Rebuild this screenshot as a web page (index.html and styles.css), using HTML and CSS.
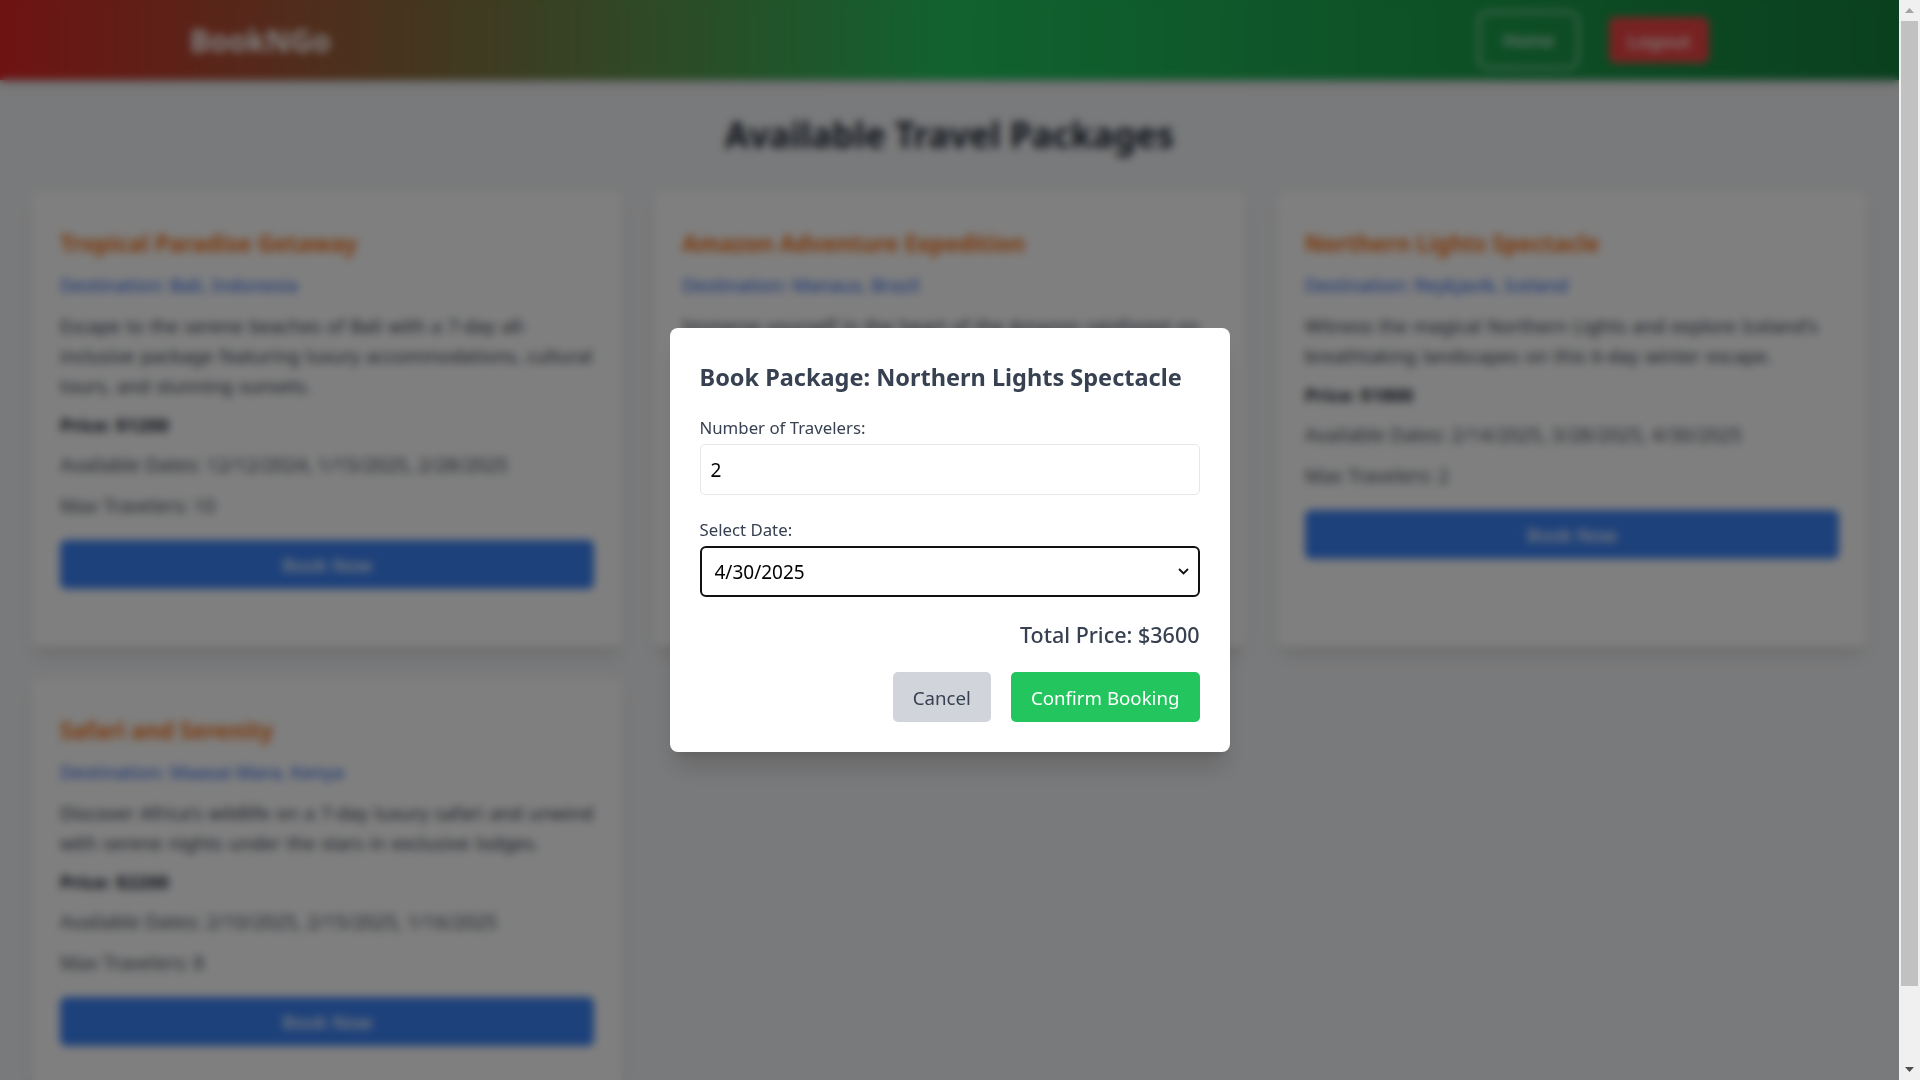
FILE: index.html
```html
<!DOCTYPE html>
<html lang="en">
<head>
<meta charset="utf-8">
<title>BookNGo - Available Travel Packages</title>
<link rel="stylesheet" href="styles.css">
</head>
<body>
<div class="app">
  <div class="viewport">
    <header class="topbar">
      <div class="topbar-inner">
        <div class="logo">BookNGo</div>
        <nav class="nav">
          <a class="nav-home">Home</a>
          <button class="nav-logout" type="button">Logout</button>
        </nav>
      </div>
    </header>

    <main class="main">
      <h1 class="page-title">Available Travel Packages</h1>
      <div class="grid">
        <article class="card">
          <h3 class="card-title">Tropical Paradise Getaway</h3>
          <p class="card-dest">Destination: Bali, Indonesia</p>
          <p class="card-desc">Escape to the serene beaches of Bali with a 7-day all-inclusive package featuring luxury accommodations, cultural tours, and stunning sunsets.</p>
          <p class="card-price">Price: $1200</p>
          <p class="card-meta">Available Dates: 12/12/2024, 1/15/2025, 2/28/2025</p>
          <p class="card-meta card-meta-last">Max Travelers: 10</p>
          <button class="book-btn" type="button">Book Now</button>
        </article>
        <article class="card">
          <h3 class="card-title">Amazon Adventure Expedition</h3>
          <p class="card-dest">Destination: Manaus, Brazil</p>
          <p class="card-desc">Immerse yourself in the heart of the Amazon rainforest on an 8-day guided expedition with river cruises and jungle treks.</p>
          <p class="card-price">Price: $1500</p>
          <p class="card-meta">Available Dates: 3/10/2025, 4/5/2025, 5/20/2025</p>
          <p class="card-meta card-meta-last">Max Travelers: 12</p>
          <button class="book-btn" type="button">Book Now</button>
        </article>
        <article class="card">
          <h3 class="card-title">Northern Lights Spectacle</h3>
          <p class="card-dest">Destination: Reykjavik, Iceland</p>
          <p class="card-desc">Witness the magical Northern Lights and explore Iceland's breathtaking landscapes on this 6-day winter escape.</p>
          <p class="card-price">Price: $1800</p>
          <p class="card-meta">Available Dates: 2/14/2025, 3/28/2025, 4/30/2025</p>
          <p class="card-meta card-meta-last">Max Travelers: 2</p>
          <button class="book-btn" type="button">Book Now</button>
        </article>
        <article class="card">
          <h3 class="card-title">Safari and Serenity</h3>
          <p class="card-dest">Destination: Maasai Mara, Kenya</p>
          <p class="card-desc">Discover Africa's wildlife on a 7-day luxury safari and unwind with serene nights under the stars in exclusive lodges.</p>
          <p class="card-price">Price: $2200</p>
          <p class="card-meta">Available Dates: 2/10/2025, 2/15/2025, 1/16/2025</p>
          <p class="card-meta card-meta-last">Max Travelers: 8</p>
          <button class="book-btn" type="button">Book Now</button>
        </article>
      </div>
    </main>

    <div class="overlay">
      <div class="modal">
        <h2 class="modal-title">Book Package: Northern Lights Spectacle</h2>
        <label class="field-label" for="travelers">Number of Travelers:</label>
        <input class="field-input" id="travelers" type="number" value="2">
        <label class="field-label" for="date">Select Date:</label>
        <div class="select-wrap">
          <select class="field-select" id="date">
            <option>2/14/2025</option>
            <option>3/28/2025</option>
            <option selected>4/30/2025</option>
          </select>
          <svg class="select-chevron" width="11" height="7" viewBox="0 0 11 7"><polyline points="1,1 5.5,5.5 10,1" fill="none" stroke="#111" stroke-width="1.8"/></svg>
        </div>
        <p class="total">Total Price: $3600</p>
        <div class="actions">
          <button class="btn-cancel" type="button">Cancel</button>
          <button class="btn-confirm" type="button">Confirm Booking</button>
        </div>
      </div>
    </div>
  </div>

  <div class="scrollbar">
    <div class="sb-btn">
      <svg width="9" height="5" viewBox="0 0 9 5"><polygon points="0,5 4.5,0 9,5" fill="#a3a3a3"/></svg>
    </div>
    <div class="sb-track"><div class="sb-thumb"></div></div>
    <div class="sb-btn">
      <svg width="9" height="5" viewBox="0 0 9 5"><polygon points="0,0 9,0 4.5,5" fill="#505050"/></svg>
    </div>
  </div>
</div>
</body>
</html>
```

FILE: styles.css
```css
* {
  box-sizing: border-box;
}

html, body {
  margin: 0;
  padding: 0;
  height: 100%;
}

body {
  font-family: "Noto Sans", "Open Sans", sans-serif;
  color: #374151;
  overflow: hidden;
}

.app {
  display: flex;
  height: 100vh;
}

.viewport {
  position: relative;
  flex: 1;
  height: 100vh;
  overflow: hidden;
  background: #f3f4f6;
}

/* Header */
.topbar {
  height: 80px;
  background: linear-gradient(to right, #dc2626, #22c55e, #15803d);
  box-shadow: 0 4px 8px rgba(0, 0, 0, 0.15);
}

.topbar-inner {
  height: 100%;
  padding: 0 10%;
  display: flex;
  align-items: center;
  justify-content: space-between;
}

.logo {
  color: #ffffff;
  font-size: 30px;
  font-weight: 700;
  line-height: 40px;
  margin-top: 2px;
}

.nav {
  display: flex;
  align-items: center;
  gap: 30px;
}

.nav-home {
  width: 101px;
  height: 58px;
  display: flex;
  align-items: center;
  justify-content: center;
  border: 2px solid rgba(255, 255, 255, 0.75);
  border-radius: 10px;
  color: rgba(255, 255, 255, 0.85);
  font-size: 18px;
  font-weight: 500;
}

.nav-logout {
  width: 100px;
  height: 46px;
  border: none;
  border-radius: 6px;
  background: #ef4444;
  color: #ffffff;
  font-family: inherit;
  font-size: 18.5px;
  font-weight: 500;
}

/* Main */
.main {
  padding: 32px 32px 32px;
}

.page-title {
  margin: 0 0 36px;
  text-align: center;
  font-size: 35.1px;
  line-height: 44px;
  font-weight: 700;
  color: #1f2937;
}

.grid {
  display: grid;
  grid-template-columns: repeat(3, 1fr);
  gap: 32px;
}

.card {
  background: #ffffff;
  border-radius: 8px;
  padding: 36px 28px 58px;
  box-shadow: 0 10px 15px -3px rgba(0, 0, 0, 0.1), 0 4px 6px -4px rgba(0, 0, 0, 0.1);
}

.card p {
  margin: 0;
}

.card-title {
  margin: 0 0 11px;
  font-size: 22.7px;
  line-height: 32px;
  font-weight: 700;
  color: #f97316;
}

.card-dest {
  font-size: 18.5px;
  line-height: 28px;
  font-weight: 400;
  color: #2563eb;
  margin-bottom: 12px !important;
}

.card-desc {
  font-size: 18.5px;
  line-height: 30px;
  word-spacing: 1.1px;
  color: #374151;
  margin-bottom: 10px !important;
}

.card-price {
  font-size: 18.5px;
  line-height: 28px;
  font-weight: 700;
  color: #1f2937;
  margin-bottom: 12px !important;
}

.card-meta {
  font-size: 19px;
  line-height: 28px;
  color: #4b5563;
  margin-bottom: 13px !important;
}

.card-meta-last {
  margin-bottom: 20px !important;
}

.book-btn {
  display: block;
  width: 100%;
  height: 49px;
  border: none;
  border-radius: 6px;
  background: #3b82f6;
  color: #ffffff;
  font-family: inherit;
  font-size: 18.5px;
  font-weight: 500;
}

/* Modal */
.overlay {
  position: absolute;
  inset: 0;
  background: rgba(0, 0, 0, 0.5);
  backdrop-filter: blur(4px);
  -webkit-backdrop-filter: blur(4px);
  display: flex;
  align-items: center;
  justify-content: center;
}

.modal {
  width: 560px;
  background: #ffffff;
  border-radius: 8px;
  padding: 31px 30px 30px;
  box-shadow: 0 20px 25px -5px rgba(0, 0, 0, 0.15), 0 8px 10px -6px rgba(0, 0, 0, 0.1);
}

.modal-title {
  margin: 0 0 20px;
  font-size: 23.5px;
  line-height: 36px;
  font-weight: 700;
  color: #374151;
}

.field-label {
  display: block;
  font-size: 16.8px;
  line-height: 25px;
  color: #374151;
  margin-bottom: 4px;
}

.field-input {
  display: block;
  width: 100%;
  height: 51px;
  margin: 0 0 22px;
  padding: 0 10px;
  border: 1px solid #e5e7eb;
  border-radius: 5px;
  background: #ffffff;
  font-family: inherit;
  font-size: 19px;
  color: #000000;
  outline: none;
  -moz-appearance: textfield;
}

.field-input::-webkit-inner-spin-button,
.field-input::-webkit-outer-spin-button {
  -webkit-appearance: none;
  margin: 0;
}

.select-wrap {
  position: relative;
  margin-bottom: 23px;
}

.field-select {
  display: block;
  width: 100%;
  height: 51px;
  padding: 0 13px;
  border: 2px solid #111111;
  border-radius: 6px;
  background: #ffffff;
  font-family: inherit;
  font-size: 19px;
  color: #000000;
  -webkit-appearance: none;
  appearance: none;
  outline: none;
}

.select-chevron {
  position: absolute;
  right: 11px;
  top: 22px;
}

.total {
  margin: 0 0 22px;
  text-align: right;
  font-size: 21.5px;
  line-height: 30px;
  font-weight: 500;
  color: #374151;
}

.actions {
  display: flex;
  justify-content: flex-end;
  gap: 20px;
}

.btn-cancel,
.btn-confirm {
  height: 50px;
  padding: 0 20px;
  border: none;
  border-radius: 5px;
  font-family: inherit;
  font-size: 18.7px;
}

.btn-cancel {
  background: #d1d5db;
  color: #374151;
}

.btn-confirm {
  background: #22c55e;
  color: #ffffff;
}

/* Scrollbar */
.scrollbar {
  width: 21px;
  height: 100vh;
  background: #f0f0f0;
  display: flex;
  flex-direction: column;
}

.sb-btn {
  height: 21px;
  display: flex;
  align-items: center;
  justify-content: center;
}

.sb-track {
  flex: 1;
  padding: 0 2px;
}

.sb-thumb {
  height: 965px;
  background: #c1c1c1;
}
```
